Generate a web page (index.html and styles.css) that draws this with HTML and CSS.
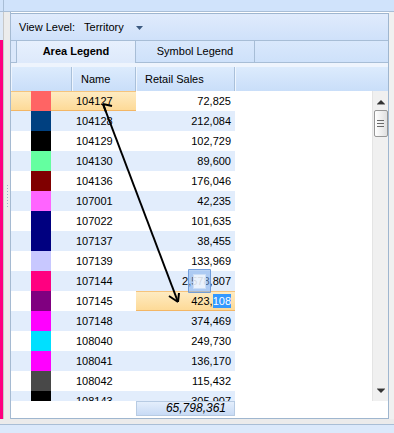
FILE: index.html
```html
<!DOCTYPE html>
<html>
<head>
<meta charset="utf-8">
<link rel="stylesheet" href="styles.css">
</head>
<body>
<div class="app">
  <div class="topband"><div class="topband-left"></div></div>
  <div class="middle">
    <div class="leftstrip">
      <div class="pinkcol"><div class="pinktop"></div><div class="pink"></div></div>
      <div class="vline"></div>
      <div class="splitter"><div class="grip"></div></div>
      <div class="vline blue"></div>
    </div>
    <div class="panel">
      <div class="viewbar">
        <span class="vlabel">View Level:</span>
        <span class="vvalue">Territory</span>
        <svg class="ddarrow" width="7" height="4" viewBox="0 0 7 4"><path d="M0 0H7L3.5 4Z" fill="#3c5a80"/></svg>
      </div>
      <div class="tabstrip">
        <div class="tabindent"></div>
        <div class="tab active">Area Legend</div>
        <div class="tab">Symbol Legend</div>
        <div class="tabrest"></div>
      </div>
      <div class="gap"></div>
      <div class="grid">
        <div class="header">
          <div class="h c1"></div>
          <div class="h c2">Name</div>
          <div class="h c3">Retail Sales</div>
          <div class="h c4"></div>
        </div>
        <div class="bodyarea">
          <div class="rows">
            <div class="row"><div class="c1 sel"><i class="sw" style="background:#ff6464"></i></div><div class="c2 sel">104127</div><div class="c3">72,825</div></div>
            <div class="row alt"><div class="c1"><i class="sw" style="background:#004080"></i></div><div class="c2">104128</div><div class="c3">212,084</div></div>
            <div class="row"><div class="c1"><i class="sw" style="background:#000000"></i></div><div class="c2">104129</div><div class="c3">102,729</div></div>
            <div class="row alt"><div class="c1"><i class="sw" style="background:#64ffa0"></i></div><div class="c2">104130</div><div class="c3">89,600</div></div>
            <div class="row"><div class="c1"><i class="sw" style="background:#800000"></i></div><div class="c2">104136</div><div class="c3">176,046</div></div>
            <div class="row alt"><div class="c1"><i class="sw" style="background:#ff64ff"></i></div><div class="c2">107001</div><div class="c3">42,235</div></div>
            <div class="row"><div class="c1"><i class="sw" style="background:#000080"></i></div><div class="c2">107022</div><div class="c3">101,635</div></div>
            <div class="row alt"><div class="c1"><i class="sw" style="background:#000080"></i></div><div class="c2">107137</div><div class="c3">38,455</div></div>
            <div class="row"><div class="c1"><i class="sw" style="background:#c8c8ff"></i></div><div class="c2">107139</div><div class="c3">133,969</div></div>
            <div class="row alt"><div class="c1"><i class="sw" style="background:#ff0080"></i></div><div class="c2">107144</div><div class="c3">2,578,807</div></div>
            <div class="row"><div class="c1"><i class="sw" style="background:#800080"></i></div><div class="c2">107145</div><div class="c3 sel">423,<span class="hl">108</span></div></div>
            <div class="row alt"><div class="c1"><i class="sw" style="background:#ff00ff"></i></div><div class="c2">107148</div><div class="c3">374,469</div></div>
            <div class="row"><div class="c1"><i class="sw" style="background:#00e0ff"></i></div><div class="c2">108040</div><div class="c3">249,730</div></div>
            <div class="row alt"><div class="c1"><i class="sw" style="background:#ff00ff"></i></div><div class="c2">108041</div><div class="c3">136,170</div></div>
            <div class="row"><div class="c1"><i class="sw" style="background:#484848"></i></div><div class="c2">108042</div><div class="c3">115,432</div></div>
            <div class="row alt"><div class="c1"><i class="sw" style="background:#000000"></i></div><div class="c2">108143</div><div class="c3">305,907</div></div>
          </div>
          <div class="scrollbar">
            <svg class="sb-up" width="8" height="5" viewBox="0 0 8 5"><path d="M4 0L8 4H0Z" fill="#333"/><rect x="0" y="4" width="8" height="1" fill="#999"/></svg>
            <div class="thumb"><i></i><i></i><i></i></div>
            <div class="sb-space"></div>
            <svg class="sb-down" width="8" height="5" viewBox="0 0 8 5"><rect x="0" y="0" width="8" height="1" fill="#999"/><path d="M0 1H8L4 5Z" fill="#333"/></svg>
          </div>
        </div>
        <div class="footer">
          <div class="f c1"></div>
          <div class="f c2"></div>
          <div class="f c3 sum">65,798,361</div>
        </div>
      </div>
    </div>
    <div class="rightstrip"></div>
  </div>
  <div class="bottomgap"></div>
  <div class="bottomband"></div>

  <div class="dragicon"><div class="draginner"></div></div>
  <svg class="arrow" width="394" height="433" viewBox="0 0 394 433">
    <line x1="103" y1="104" x2="178" y2="302" stroke="#000" stroke-width="2"/>
    <path d="M103 104L112 106M103 104L106 112" stroke="#000" stroke-width="2" fill="none"/>
    <path d="M178 302L169 296M178 302L179 293" stroke="#000" stroke-width="2" fill="none"/>
  </svg>
</div>
</body>
</html>
```

FILE: styles.css
```css
* { box-sizing: border-box; margin: 0; padding: 0; }
html, body { width: 394px; height: 433px; overflow: hidden; background: #ffffff; }
body { font-family: "Liberation Sans", Arial, sans-serif; font-size: 11px; color: #000; }
.app { position: relative; width: 394px; height: 433px; display: flex; flex-direction: column; }

.topband { height: 12px; background: #d0e3fb; border-bottom: 1px solid #a9bed6; display: flex; }
.topband-left { width: 4px; border-right: 1px solid #a9bed6; }

.middle { display: flex; height: 407px; }
.leftstrip { width: 11px; display: flex; background: #ececec; }
.pinkcol { width: 3px; display: flex; flex-direction: column; }
.pinktop { height: 28px; background: #dde9f8; }
.pink { flex: 1; background: #ff0080; }
.vline { width: 1px; background: #c8c8c8; }
.vline.blue { background: #a5bad2; }
.splitter { width: 6px; background: #ececec; display: flex; align-items: center; justify-content: center; }
.grip { width: 3px; height: 24px; margin-top: -40px; background-image: radial-gradient(circle, #9db0c8 0.8px, transparent 1px); background-size: 3px 3px; }

.panel { width: 378px; margin-top: 1px; height: 406px; border: 1px solid #9fb6cf; border-left: none; display: flex; flex-direction: column; background: #fff; }
.rightstrip { flex: 1; background: #f0f0f0; }

.viewbar { height: 27px; background: linear-gradient(#e0ebfc, #cfe1fa); border-bottom: 1px solid #a7bdd6; display: flex; align-items: center; padding-left: 8px; }
.vlabel { margin-right: 9px; }
.vvalue { margin-right: 12px; }
.ddarrow { margin-top: 1px; }

.tabstrip { height: 22px; display: flex; background: #d4e5fb; }
.tabindent { width: 6px; border-right: 1px solid #a7bdd6; border-bottom: 1px solid #a7bdd6; background: #dbe8fb; }
.tab { width: 119px; display: flex; align-items: center; justify-content: center; padding-bottom: 2px; background: linear-gradient(#d9e8fc, #cee1fa); border-right: 1px solid #a7bdd6; border-bottom: 1px solid #a7bdd6; }
.tab.active { width: 119px; font-weight: bold; background: linear-gradient(#e7f0fd, #dde9fb); border-bottom: none; }
.tabrest { flex: 1; background: linear-gradient(#d9e8fc, #cee1fa); border-bottom: 1px solid #a7bdd6; }

.gap { height: 4px; background: #eef4fd; }

.grid { flex: 1; display: flex; flex-direction: column; }
.header { height: 24px; display: flex; background: linear-gradient(#dcebfd, #c9def9); }
.h { display: flex; align-items: center; border-right: 1px solid #a9c0da; box-shadow: inset 1px 0 0 #eef5fe; }
.header .c4 { flex: 1; border-right: none; }
.header .c2, .header .c3 { padding-left: 9px; padding-bottom: 1px; }

.c1 { width: 61px; flex: none; }
.c2 { width: 64px; flex: none; }
.c3 { width: 99px; flex: none; }

.bodyarea { height: 310px; display: flex; overflow: hidden; }
.rows { flex: 1; overflow: hidden; }
.row { height: 20px; display: flex; line-height: 20px; }
.row .c1 { display: flex; justify-content: flex-start; padding-left: 20px; }
.row .c2 { padding-left: 4px; }
.row .c3 { text-align: right; padding-right: 4px; }
.row.alt .c1, .row.alt .c2, .row.alt .c3 { background: #e2edfc; }
.sw { display: block; width: 20px; height: 20px; }
.row .sel { background: linear-gradient(#feecc4, #fdd995); box-shadow: inset 0 -1px 0 #f3b664, inset 0 1px 0 #f6c47c; }
.hl { background: #3399ff; color: #fff; padding: 1px 0; }

.scrollbar { width: 16px; background: #f0f0f0; border-left: 1px solid #e4e4e4; display: flex; flex-direction: column; align-items: center; }
.sb-up { margin-top: 9px; }
.thumb { width: 14px; height: 27px; margin-top: 5px; border: 1px solid #979797; border-radius: 2px; background: linear-gradient(90deg, #ffffff, #e0e0e0); display: flex; flex-direction: column; align-items: center; justify-content: center; gap: 2px; }
.thumb i { display: block; width: 7px; height: 1px; background: #6a6a6a; }
.sb-space { flex: 1; }
.sb-down { margin-bottom: 8px; }

.footer { height: 15px; display: flex; background: #fff; }
.f { height: 15px; }
.sum { background: linear-gradient(#e4eefc, #c8dbf5); border: 1px solid #b7cbe3; text-align: right; font-style: italic; font-size: 12px; line-height: 13px; padding-right: 8px; }

.bottomgap { height: 6px; background: #ebebeb; border-bottom: 1px solid #a9bed6; }
.bottomband { flex: 1; background: #dbe9fb; }

.arrow { position: absolute; left: 0; top: 0; pointer-events: none; }
.dragicon { position: absolute; left: 188px; top: 269px; width: 23px; height: 24px; border: 1px solid rgba(90, 140, 210, 0.7); background: rgba(130, 175, 235, 0.55); border-radius: 1px; display: flex; align-items: center; justify-content: center; }
.draginner { width: 13px; height: 15px; background: rgba(255, 255, 255, 0.75); border: 1px solid rgba(200, 220, 245, 0.9); }
```
